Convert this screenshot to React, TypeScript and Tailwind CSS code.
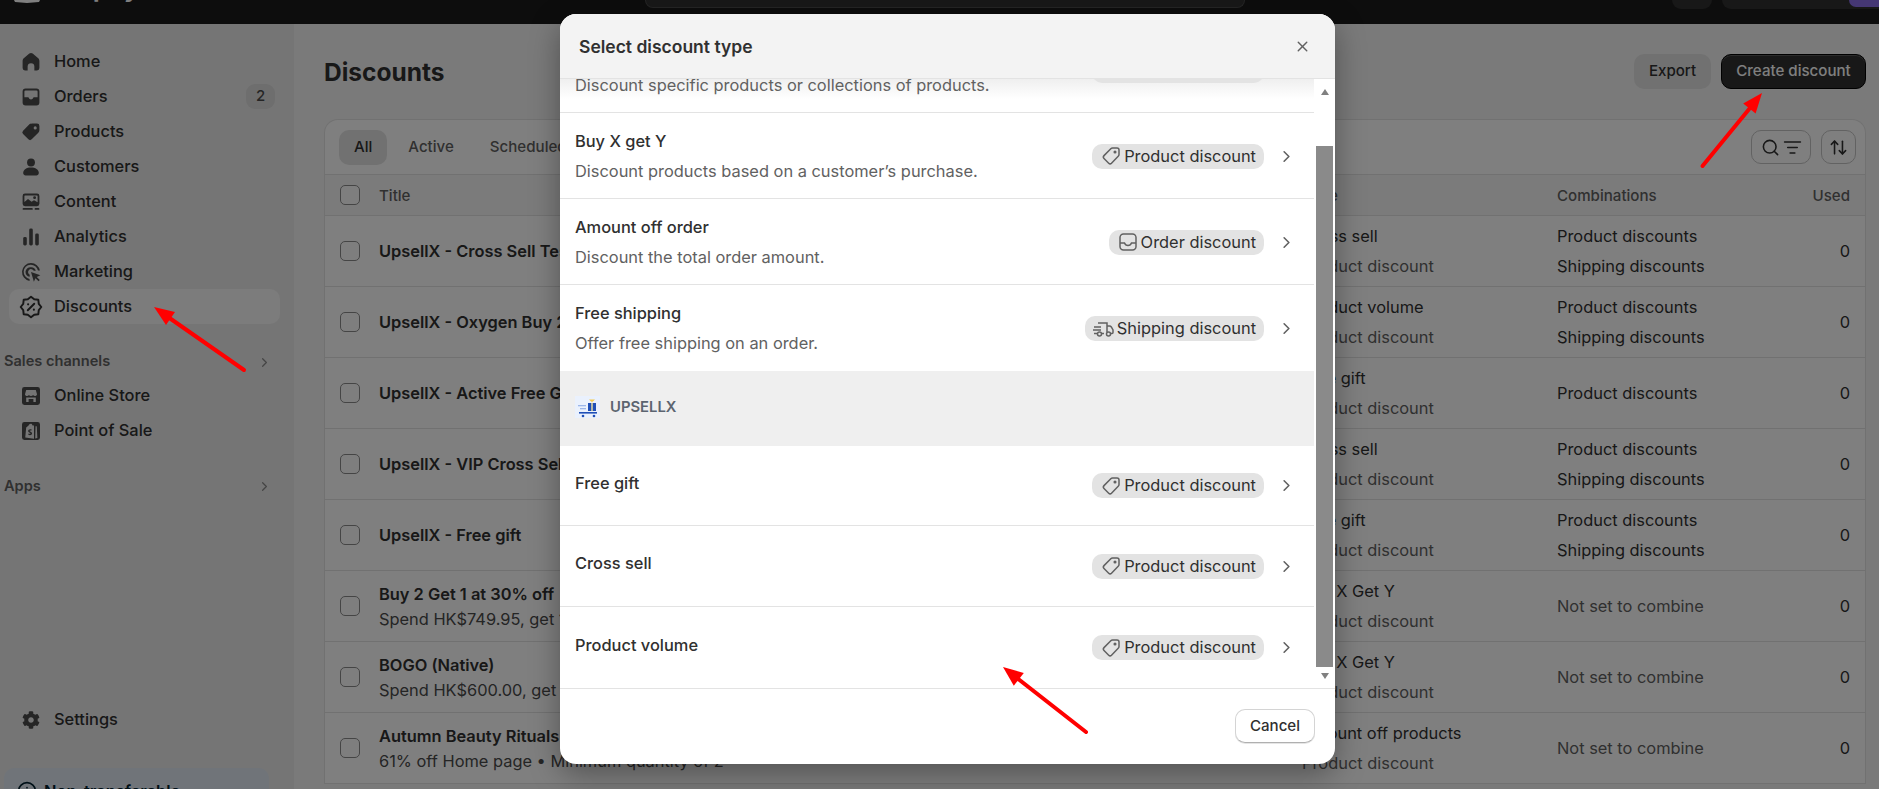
import React from 'react';
import { ChevronRight, ArrowUpDown, ListFilter, Search, X, Info } from 'lucide-react';
import { FaCog } from 'react-icons/fa';

const Glyph: React.FC<{ children: React.ReactNode }> = ({ children }) => (
  <svg viewBox="0 0 20 20" className="w-6 h-6 shrink-0 fill-[#4a4a4a]">{children}</svg>
);

// eight lobed badge outline for the discounts icon
const badgePoints = Array.from({ length: 16 }, (_, i) => {
  const r = i % 2 === 0 ? 8.6 : 7;
  const a = (i * Math.PI) / 8;
  return `${(10 + r * Math.sin(a)).toFixed(2)},${(10 - r * Math.cos(a)).toFixed(2)}`;
}).join(' ');

const navIcons: Record<string, React.ReactNode> = {
  Home: <Glyph><path d="M8.6 3 4.2 6.7C3.5 7.3 3 8.2 3 9.2V15a2 2 0 0 0 2 2h2.2v-3.2a2.8 2.8 0 0 1 5.6 0V17H15a2 2 0 0 0 2-2V9.2c0-1-.5-1.9-1.2-2.5L11.4 3a2.2 2.2 0 0 0-2.8 0z" /></Glyph>,
  Orders: <Glyph><path fillRule="evenodd" d="M5.5 3h9A2.5 2.5 0 0 1 17 5.5v9a2.5 2.5 0 0 1-2.5 2.5h-9A2.5 2.5 0 0 1 3 14.5v-9A2.5 2.5 0 0 1 5.5 3zm-1 2.5v4.7h3c.4 0 .6.2.7.5.2.8 1 1.3 1.8 1.3s1.600-.5 1.800-1.300c.1-.3.3-.5.7-.5h3V5.500a1 1 0 0 0-1-1h-9a1 1 0 0 0-1 1z" /></Glyph>,
  Products: <Glyph><path fillRule="evenodd" d="M11.5 3H15a2 2 0 0 1 2 2v3.500c0 .8-.3 1.500-.9 2.100l-5.500 5.500a2 2 0 0 1-2.800 0l-4.400-4.400a2 2 0 0 1 0-2.800l5.500-5.500C9.500 3.300 10.700 3 11.500 3zm2 2.300a1.300 1.300 0 1 0 0 2.600 1.300 1.300 0 0 0 0-2.600z" /></Glyph>,
  Customers: <Glyph><circle cx="10" cy="6.300" r="3.300" /><path d="M3.500 15c0-2.800 2.800-4.500 6.500-4.500s6.500 1.700 6.500 4.500c0 1.300-1 2-2 2h-9c-1 0-2-.7-2-2z" /></Glyph>,
  Content: <Glyph><path fillRule="evenodd" d="M5 3h10a2 2 0 0 1 2 2v6.500a2 2 0 0 1-2 2H5a2 2 0 0 1-2-2V5a2 2 0 0 1 2-2zm-.5 7 3-2.500 3 2.300 2-1.300 3 1.700V5a.5.5 0 0 0-.5-.5H5a.5.5 0 0 0-.5.500zm8.500-4.800a1.200 1.200 0 1 0 0 2.400 1.200 1.200 0 0 0 0-2.400z" /><rect x="3" y="15" width="8.500" height="1.500" rx=".75" /><rect x="13" y="15" width="4" height="1.500" rx=".75" /></Glyph>,
  Analytics: <Glyph><rect x="3.500" y="10" width="3" height="7" rx="1.200" /><rect x="8.500" y="3" width="3" height="14" rx="1.200" /><rect x="13.500" y="7" width="3" height="10" rx="1.200" /></Glyph>,
  Marketing: <Glyph><path d="M10 2.500a7.500 7.500 0 0 1 7.400 6.300h-1.600A6 6 0 1 0 8.800 15.800v1.600A7.500 7.500 0 0 1 10 2.500z" /><path d="M10 6a4 4 0 0 1 4 3h-1.700A2.500 2.500 0 1 0 8.900 12.300V14A4 4 0 0 1 10 6z" /><path d="m10 10 7.800 2.800-3 1.300 2.500 2.600-1 1-2.600-2.500-1.300 3z" /></Glyph>,
  Discounts: (
    <svg viewBox="0 0 20 20" className="w-6 h-6 shrink-0 fill-none stroke-[#303030] stroke-[1.600]">
      <polygon points={badgePoints} strokeLinejoin="round" />
      <path d="m7.300 12.700 5.400-5.400" strokeLinecap="round" />
      <circle cx="7.600" cy="7.800" r=".9" fill="#303030" stroke="none" />
      <circle cx="12.400" cy="12.200" r=".9" fill="#303030" stroke="none" />
    </svg>
  ),
  'Online Store': <Glyph><path fillRule="evenodd" d="M4.500 2.500h11a2 2 0 0 1 2 2v11a2 2 0 0 1-2 2h-11a2 2 0 0 1-2-2v-11a2 2 0 0 1 2-2zM6 5 5 8.500c0 1 .9 1.500 1.700 1.500.6 0 1.100-.3 1.600-.8.4.5 1 .8 1.700.8s1.300-.3 1.700-.8c.5.5 1 .8 1.600.8.800 0 1.700-.5 1.700-1.500L14 5zm0 6.300V15h2v-2.500h4V15h2v-3.700z" /></Glyph>,
  'Point of Sale': <Glyph><path fillRule="evenodd" d="M4.500 2.500h11a2 2 0 0 1 2 2v11a2 2 0 0 1-2 2h-11a2 2 0 0 1-2-2v-11a2 2 0 0 1 2-2zM8 5.500 6 7l-.8 8.500 7.300 1V5.500h-1.200C11 4.300 10.300 4 9.700 4 9 4 8.400 4.600 8 5.500zm5.800.500-.3 10.300 1.800-.5L14.800 6zM9.600 8.500c-1.400 0-2 .8-2 1.500 0 1.300 2 1.300 2 2 0 .5-.8.4-1.600 0l-.3 1.200c1.500.6 3.200.3 3.200-1.300 0-1.300-2-1.500-2-2 0-.4.6-.4 1.300-.2l.3-1.100a3 3 0 0 0-.9-.1z" /></Glyph>,
};

const NavItem: React.FC<{ label: string; badge?: string; active?: boolean }> = ({ label, badge, active }) => (
  <div className={`ml-[9px] w-[271px] h-[35px] rounded-[10px] flex items-center pl-[10px] pr-[5px] gap-[11px] text-[16.4px] font-medium text-[#303030] ${active ? 'bg-[#f8f8f8]' : ''}`}>
    {navIcons[label]}
    <span className="flex-1">{label}</span>
    {badge && <span className="w-[29px] h-[25px] rounded-[9px] bg-[#dcdcdc] flex items-center justify-center text-[15px] text-[#4a4a4a]">{badge}</span>}
  </div>
);

const SectionHeader: React.FC<{ label: string; height: string; top: string }> = ({ label, height, top }) => (
  <div className={`${top} ${height} pl-[4px] pr-[22px] flex items-center justify-between text-[14.6px] font-semibold text-[#616161]`}>
    <span>{label}</span>
    <ChevronRight size={15} className="text-[#8a8a8a]" />
  </div>
);

const tableRows = [
  { title: 'UpsellX - Cross Sell Test', type: 'Cross sell', combos: ['Product discounts', 'Shipping discounts'] },
  { title: 'UpsellX - Oxygen Buy 2', type: 'Product volume', combos: ['Product discounts', 'Shipping discounts'] },
  { title: 'UpsellX - Active Free Gift', type: 'Free gift', combos: ['Product discounts'] },
  { title: 'UpsellX - VIP Cross Sell', type: 'Cross sell', combos: ['Product discounts', 'Shipping discounts'] },
  { title: 'UpsellX - Free gift', type: 'Free gift', combos: ['Product discounts', 'Shipping discounts'] },
  { title: 'Buy 2 Get 1 at 30% off', sub: 'Spend HK$749.95, get 1 free', type: 'Buy X Get Y', combos: [] },
  { title: 'BOGO (Native)', sub: 'Spend HK$600.00, get 1 free', type: 'Buy X Get Y', combos: [] },
  { title: 'Autumn Beauty Rituals', sub: '61% off Home page • Minimum quantity of 2', type: 'Amount off products', combos: [] },
];

const gridCols = 'grid grid-cols-[54px_923px_255px_1fr_60px] items-center pr-[15px]';

const Checkbox = () => <div className="ml-[15px] w-[20px] h-[20px] rounded-[5px] border border-[#8a8a8a] bg-[#fdfdfd]" />;

const TagIcon = () => (
  <svg viewBox="0 0 24 24" className="w-6 h-6 shrink-0 fill-none stroke-[#616161] stroke-[1.500]">
    <path d="M13.500 4H18a2 2 0 0 1 2 2v4.500c0 .7-.3 1.300-.8 1.800l-6.700 6.900a2 2 0 0 1-2.800 0l-4.700-4.800a2 2 0 0 1 0-2.800l6.800-6.800c.5-.5 1.100-.8 1.700-.8z" />
    <circle cx="16" cy="8" r=".8" />
  </svg>
);

const OrderIcon = () => (
  <svg viewBox="0 0 24 24" className="w-6 h-6 shrink-0 fill-none stroke-[#616161] stroke-[1.500]">
    <rect x="4" y="4" width="16" height="16" rx="3.500" />
    <path d="M4 13h4.500c.6 1.600 2 2.400 3.500 2.400s2.900-.8 3.500-2.400H20" />
  </svg>
);

const TruckIcon = () => (
  <svg viewBox="0 0 24 24" className="w-6 h-6 shrink-0 fill-none stroke-[#616161] stroke-[1.500]">
    <path d="M6 6h9v9M15 9h2.500c.8 0 1.400.4 1.800 1l1.700 3v2.500a1 1 0 0 1-1 1h-1M12 16.500H10M2 10h7M1 13h8M5 16.500H2" />
    <circle cx="7.500" cy="17" r="2" />
    <circle cx="16.500" cy="17" r="2" />
  </svg>
);

const TypePill: React.FC<{ kind: 'product' | 'order' | 'shipping' }> = ({ kind }) => (
  <span className="h-[25px] rounded-[10px] bg-[#e3e3e3] pl-[7px] pr-[8px] flex items-center gap-px text-[16.4px] text-[#303030]">
    {kind === 'product' && <TagIcon />}
    {kind === 'order' && <OrderIcon />}
    {kind === 'shipping' && <TruckIcon />}
    {kind === 'product' ? 'Product discount' : kind === 'order' ? 'Order discount' : 'Shipping discount'}
  </span>
);

const typeRows = [
  { title: 'Amount off products', desc: 'Discount specific products or collections of products.', kind: 'product' as const, height: 'h-[86px] border-b' },
  { title: 'Buy X get Y', desc: 'Discount products based on a customer’s purchase.', kind: 'product' as const, height: 'h-[86px] border-b' },
  { title: 'Amount off order', desc: 'Discount the total order amount.', kind: 'order' as const, height: 'h-[86px] border-b' },
  { title: 'Free shipping', desc: 'Offer free shipping on an order.', kind: 'shipping' as const, height: 'h-[86px]' },
];

const appRows = [
  { title: 'Free gift', height: 'h-[80px] border-b' },
  { title: 'Cross sell', height: 'h-[81px] border-b' },
  { title: 'Product volume', height: 'h-[81px]' },
];

const TypeRow: React.FC<{ title: string; desc?: string; kind: 'product' | 'order' | 'shipping'; height: string }> = ({ title, desc, kind, height }) => (
  <div className={`${height} border-[#e3e3e3] flex items-center justify-between pl-[15px] pr-[18px] shrink-0`}>
    <div className={`flex flex-col gap-[8px] ${desc ? '' : 'pb-[6px]'}`}>
      <span className="text-[16.4px] leading-[22px] font-medium text-[#303030]">{title}</span>
      {desc && <span className="text-[16.4px] leading-[22px] text-[#616161]">{desc}</span>}
    </div>
    <div className={`flex items-center gap-[13px] ${desc ? 'pt-[1px]' : ''}`}>
      <TypePill kind={kind} />
      <ChevronRight size={19} className="text-[#616161]" />
    </div>
  </div>
);

const UpsellLogo = () => (
  <svg viewBox="0 0 25 22" className="w-[25px] h-[22px]">
    <rect width="25" height="22" fill="#eaf1fd" />
    <rect x="13" y="7" width="8" height="8" fill="#1f4fb8" />
    <rect x="16.300" y="7" width="1.400" height="8" fill="#f2e6a0" />
    <path d="M14 3.500h3l.2 3zM20 3.500h-3l-.2 3z" fill="#f2c94c" />
    <rect x="3" y="9" width="8" height="1.300" fill="#9bb6ea" />
    <rect x="5" y="12" width="6" height="1.300" fill="#9bb6ea" />
    <rect x="4" y="16" width="18" height="1.600" fill="#1f4fb8" />
    <circle cx="8" cy="20" r="1.300" fill="#1f4fb8" />
    <circle cx="19" cy="20" r="1.300" fill="#1f4fb8" />
  </svg>
);

const DiscountModal = () => (
  <div className="absolute left-[560px] top-[14px] w-[775px] h-[750px] bg-white rounded-[16px] overflow-hidden flex flex-col shadow-[0_10px_30px_rgba(0,0,0,0.35)]">
    <div className="h-[65px] shrink-0 bg-[#f3f3f3] border-b border-[#e3e3e3] flex items-center justify-between pl-[19px] pr-[24px] z-10">
      <span className="pt-[3px] text-[17.5px] font-semibold text-[#303030]">Select discount type</span>
      <X size={17} className="text-[#616161]" />
    </div>
    <div className="relative flex-1 flex overflow-hidden">
      <div className="absolute left-0 w-[754px] top-0 h-[20px] bg-gradient-to-b from-[#efefef] to-transparent" />
      <div className="relative w-[754px] shrink-0 flex flex-col -mt-[52px]">
        {typeRows.map((row) => <TypeRow key={row.title} {...row} />)}
        <div className="h-[75px] shrink-0 bg-[#efefef] flex items-center gap-[10px] pl-[15px] pb-[3px]">
          <UpsellLogo />
          <span className="text-[14.8px] font-semibold text-[#5c6470]">UPSELLX</span>
        </div>
        {appRows.map((row) => <TypeRow key={row.title} title={row.title} kind="product" height={row.height} />)}
      </div>
      <div className="ml-[2px] w-[17px] shrink-0 flex flex-col items-center">
        <div className="h-[67px] w-full pt-[10px] flex justify-center">
          <span className="w-0 h-0 border-x-[4px] border-x-transparent border-b-[6px] border-b-[#808080]" />
        </div>
        <div className="h-[521px] w-full bg-[#8a8a8a]" />
        <span className="mt-[6px] w-0 h-0 border-x-[4px] border-x-transparent border-t-[6px] border-t-[#808080]" />
      </div>
    </div>
    <div className="h-[76px] shrink-0 border-t border-[#e3e3e3] flex items-center justify-end pr-[20px] pb-[1px]">
      <button className="w-[80px] h-[34px] rounded-[10px] bg-white border border-[#d4d4d4] border-b-[#b0b0b0] shadow-[0_1px_0_rgba(0,0,0,0.1)] text-[15.1px] font-medium text-[#303030]">Cancel</button>
    </div>
  </div>
);

export default function App() {
  return (
    <div className="relative w-[1879px] h-[789px] overflow-hidden bg-[#f1f1f1] flex flex-col font-['Inter',sans-serif]">
      {/* top bar, cut by the capture */}
      <div className="h-[24px] shrink-0 bg-[#1a1a1a] flex items-start overflow-hidden">
        <div className="w-[645px] shrink-0 flex items-start pl-[14px]">
          <svg viewBox="0 0 26 3" className="w-[26px] h-[3px]"><path d="M0 0h26l-1 2-12 1-12-1z" fill="#fff" /></svg>
          <span className="ml-[10px] -mt-[25px] text-[24px] leading-[28px] font-bold text-white">shopify</span>
        </div>
        <div className="w-[600px] h-[8px] bg-[#303030] border border-t-0 border-[#4a4a4a] rounded-b-[10px]" />
        <div className="flex-1" />
        <div className="w-[40px] h-[9px] rounded-b-[10px] bg-[#303030]" />
        <div className="ml-[10px] w-[157px] h-[9px] rounded-bl-[10px] bg-[#303030] flex justify-end">
          <div className="w-[30px] h-[7px] rounded-bl-[8px] bg-[#8a6fe8]" />
        </div>
      </div>

      <div className="flex-1 flex min-h-0">
        {/* sidebar */}
        <aside className="w-[294px] shrink-0 bg-[#ebebeb] flex flex-col pt-[20px] overflow-hidden">
          {['Home', 'Orders', 'Products', 'Customers', 'Content', 'Analytics', 'Marketing'].map((label) => (
            <NavItem key={label} label={label} badge={label === 'Orders' ? '2' : undefined} />
          ))}
          <NavItem label="Discounts" active />
          <SectionHeader label="Sales channels" top="mt-[20px] pt-[2px]" height="h-[34px]" />
          <NavItem label="Online Store" />
          <NavItem label="Point of Sale" />
          <SectionHeader label="Apps" top="mt-[21px]" height="h-[35px]" />
          <div className="mt-auto ml-[9px] h-[35px] flex items-center pl-[13px] gap-[14px] text-[16.4px] font-medium text-[#303030]">
            <FaCog size={18} className="text-[#4a4a4a] shrink-0" />
            <span>Settings</span>
          </div>
          <div className="mt-[31px] ml-[4px] w-[265px] h-[21px] shrink-0 overflow-hidden rounded-t-[10px] bg-[#e0e8f2] pt-[13px] pl-[13px] flex items-start gap-[7px] text-[16.4px] leading-[20px] font-semibold text-[#00202e]">
            <Info size={20} className="shrink-0 text-[#00202e]" />
            <span>Non-transferable</span>
          </div>
        </aside>

        {/* main */}
        <main className="flex-1 min-w-0 pl-[30px] pr-[13px] pt-[30px] overflow-hidden bg-[#f5f5f5]">
          <div className="h-[35px] flex items-center justify-between">
            <h1 className="pt-[2px] text-[24.5px] font-bold text-[#303030]">Discounts</h1>
            <div className="flex gap-[10px]">
              <button className="w-[77px] h-[35px] rounded-[10px] bg-[#e3e3e3] text-[15.1px] font-medium text-[#303030]">Export</button>
              <button className="w-[145px] h-[35px] rounded-[10px] bg-[#303030] border border-black text-[15.1px] font-medium text-white shadow-[inset_0_1px_0_rgba(255,255,255,0.2)]">Create discount</button>
            </div>
          </div>

          <div className="mt-[30px] bg-[#ffffff] rounded-t-[14px] border border-[#e3e3e3] border-b-0">
            <div className="h-[55px] border-b border-[#e3e3e3] flex items-center justify-between pl-[14px] pr-[9px] text-[15.1px] font-medium text-[#616161]">
              <div className="flex items-center gap-[6px]">
                <span className="h-[35px] px-[15px] rounded-[10px] bg-[#e3e3e3] flex items-center text-[#303030]">All</span>
                <span className="h-[35px] px-[15px] flex items-center">Active</span>
                <span className="h-[35px] px-[15px] flex items-center">Scheduled</span>
                <span className="h-[35px] px-[15px] flex items-center">Expired</span>
              </div>
              <div className="flex items-center gap-[10px]">
                <div className="w-[60px] h-[34px] rounded-[10px] border border-[#c4c4c4] flex items-center justify-center gap-[3px] text-[#303030]">
                  <Search size={19} />
                  <ListFilter size={19} />
                </div>
                <div className="w-[35px] h-[34px] rounded-[10px] border border-[#c4c4c4] flex items-center justify-center text-[#303030]">
                  <ArrowUpDown size={19} />
                </div>
              </div>
            </div>

            <div className={`${gridCols} h-[41px] border-b border-[#e3e3e3] bg-[#f7f7f7] text-[15.1px] font-medium text-[#616161]`}>
              <Checkbox />
              <span className="pt-[2px]">Title</span>
              <span className="pt-[2px]">Type</span>
              <span className="pt-[2px]">Combinations</span>
              <span className="pt-[2px] text-right">Used</span>
            </div>

            {tableRows.map((row) => (
              <div key={row.title} className={`${gridCols} h-[71px] border-b border-[#e3e3e3] text-[16.4px] text-[#303030]`}>
                <Checkbox />
                <div className="flex flex-col gap-[3px] leading-[22px]">
                  <span className="font-semibold">{row.title}</span>
                  {row.sub && <span className="text-[#4a4a4a]">{row.sub}</span>}
                </div>
                <div className="flex flex-col gap-[8px] leading-[22px]">
                  <span>{row.type}</span>
                  <span className="text-[#616161]">Product discount</span>
                </div>
                <div className="flex flex-col gap-[8px] leading-[22px]">
                  {row.combos.map((c) => <span key={c}>{c}</span>)}
                  {row.combos.length === 0 && <span className="text-[#616161]">Not set to combine</span>}
                </div>
                <span className="text-right">0</span>
              </div>
            ))}
          </div>
        </main>
      </div>

      {/* dim layer behind the dialog */}
      <div className="absolute inset-0 bg-black/50" />

      <DiscountModal />

      {/* annotation arrows drawn on the capture */}
      <svg viewBox="0 0 1879 789" className="absolute inset-0 w-[1879px] h-[789px] pointer-events-none">
        <g stroke="#ff0000" strokeWidth="4" strokeLinecap="round" fill="#ff0000">
          <line x1="244" y1="370" x2="168" y2="317" />
          <line x1="1702.500" y1="166" x2="1750" y2="108" />
          <line x1="1086" y1="732" x2="1017" y2="678" />
        </g>
        <g fill="#ff0000">
          <polygon points="154,307 175,312 166,325" />
          <polygon points="1762,93 1755.600,113.500 1743.200,103.500" />
          <polygon points="1003,667 1023.800,673 1013.800,685.700" />
        </g>
      </svg>
    </div>
  );
}
